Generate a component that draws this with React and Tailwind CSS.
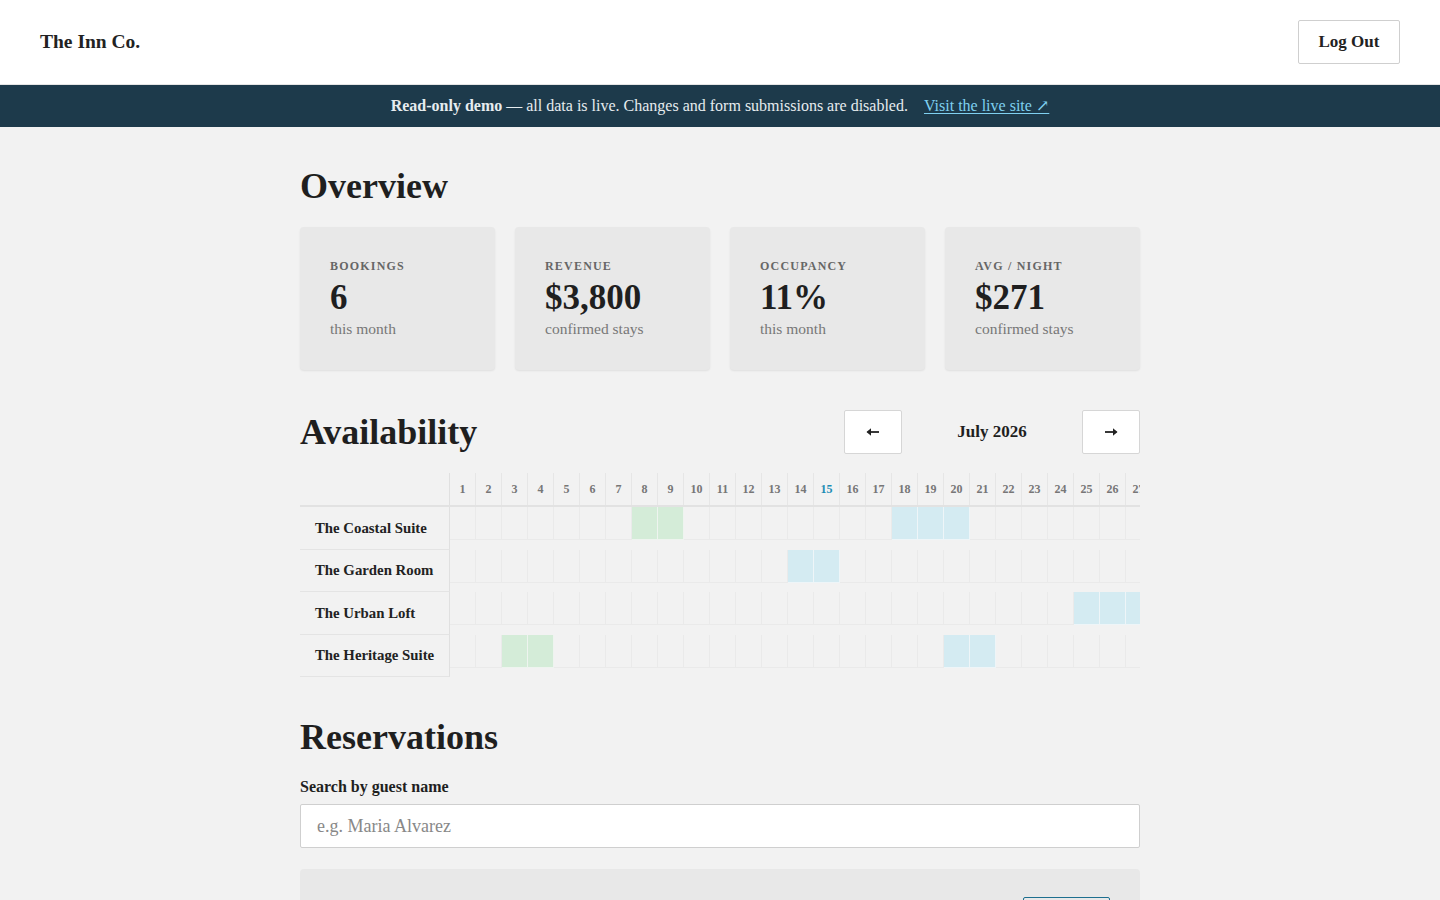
import React from 'react';

const font = { fontFamily: '"Liberation Serif", "DejaVu Serif", serif' };

const stats = [
  { label: 'Bookings', value: '6', sub: 'this month' },
  { label: 'Revenue', value: '$3,800', sub: 'confirmed stays' },
  { label: 'Occupancy', value: '11%', sub: 'this month' },
  { label: 'Avg / Night', value: '$271', sub: 'confirmed stays' },
];

// booked days per room: g = green (confirmed), b = blue (pending)
const rooms = [
  { name: 'The Coastal Suite', days: { 8: 'g', 9: 'g', 18: 'b', 19: 'b', 20: 'b' } },
  { name: 'The Garden Room', days: { 14: 'b', 15: 'b' } },
  { name: 'The Urban Loft', days: { 25: 'b', 26: 'b', 27: 'b' } },
  { name: 'The Heritage Suite', days: { 3: 'g', 4: 'g', 20: 'b', 21: 'b' } },
];

const days = Array.from({ length: 31 }, (_, i) => i + 1);
const today = 15;

function StatCard({ label, value, sub }) {
  return (
    <div className="bg-[#e8e8e8] rounded-[4px] shadow-[0_1px_2px_rgba(0,0,0,0.08)] h-[143px] px-[30px] pt-[30px]">
      <div className="text-[12px] leading-[18px] uppercase tracking-[0.1em] text-[#666] font-semibold">{label}</div>
      <div className="mt-[4px] text-[35px] leading-[38px] font-bold text-[#1f1f1f]">{value}</div>
      <div className="mt-[2px] text-[15.5px] leading-[20px] text-[#777]">{sub}</div>
    </div>
  );
}

function Arrow({ dir }) {
  return (
    <svg width="14" height="10" viewBox="0 0 14 10" className={dir === 'right' ? 'rotate-180' : ''}>
      <path d="M1.5 5H13" stroke="#222" strokeWidth="1.8" />
      <path d="M0.5 5L5 1.2V8.8Z" fill="#222" />
    </svg>
  );
}

function dayCellClass(kind) {
  if (kind === 'g') return 'bg-[#d4ecd8] border-[#eef4ef]';
  if (kind === 'b') return 'bg-[#d4ebf2] border-[#eef5f8]';
  return 'border-[#eaeaea]';
}

export default function App() {
  return (
    <div style={font} className="min-h-screen bg-[#f2f2f2] text-[#1f1f1f]">
      <header className="h-[85px] bg-white border-b border-[#e5e5e5] px-10 flex items-center justify-between">
        <div className="text-[19.5px] font-bold text-[#222]">The Inn Co.</div>
        <button className="h-[44px] w-[102px] border border-[#cfcfcf] rounded-[2px] bg-white text-[17px] font-bold text-[#222]">
          Log Out
        </button>
      </header>

      <div className="h-[42px] bg-[#1d3a4b] flex items-center justify-center text-[16px] text-[#e6ecef]">
        <span>
          <span className="font-bold">Read-only demo</span> — all data is live. Changes and form submissions are disabled.
        </span>
        <a className="ml-4 text-[#7fd0f0] underline underline-offset-2" href="#">
          Visit the live site ↗
        </a>
      </div>

      <main className="w-[840px] mx-auto pt-[40px] pb-10">
        <h2 className="text-[36px] leading-[38px] font-bold">Overview</h2>
        <div className="mt-[22px] grid grid-cols-4 gap-5">
          {stats.map((s) => (
            <StatCard key={s.label} {...s} />
          ))}
        </div>

        <div className="mt-[40px] flex items-center justify-between">
          <h2 className="text-[36px] leading-[38px] font-bold">Availability</h2>
          <div className="flex items-center">
            <button className="w-[58px] h-[44px] bg-white border border-[#d6d6d6] rounded-[2px] flex items-center justify-center">
              <Arrow dir="left" />
            </button>
            <div className="w-[180px] text-center text-[17px] font-bold">July 2026</div>
            <button className="w-[58px] h-[44px] bg-white border border-[#d6d6d6] rounded-[2px] flex items-center justify-center">
              <Arrow dir="right" />
            </button>
          </div>
        </div>

        <div className="mt-[19px] overflow-hidden">
          <div className="w-max">
            <div className="flex h-[34px] border-b-2 border-[#e2e2e2]">
              <div className="w-[150px] shrink-0 border-r border-[#e0e0e0]" />
              {days.map((d) => (
                <div
                  key={d}
                  className={`w-[26px] shrink-0 border-r border-[#e6e6e6] flex items-center justify-center text-[12px] font-bold ${
                    d === today ? 'text-[#1d8db5]' : 'text-[#777]'
                  }`}
                >
                  {d}
                </div>
              ))}
            </div>
            {rooms.map((r) => (
              <div key={r.name} className="flex h-[42.5px]">
                <div className="w-[150px] shrink-0 border-r border-b border-r-[#e0e0e0] border-b-[#e4e4e4] pl-[15px] flex items-center text-[14.8px] font-bold text-[#222]">
                  {r.name}
                </div>
                {days.map((d) => (
                  <div
                    key={d}
                    className={`w-[26px] h-[33px] shrink-0 border-r border-b ${dayCellClass(r.days[d])}`}
                  />
                ))}
              </div>
            ))}
          </div>
        </div>

        <h2 className="mt-[41px] text-[36px] leading-[38px] font-bold">Reservations</h2>
        <label className="block mt-[21px] text-[16px] leading-[20px] font-bold">Search by guest name</label>
        <input
          className="mt-[7px] w-full h-[44px] bg-white border border-[#cfcfcf] rounded-[2px] px-4 text-[18px] placeholder:text-[#888] outline-none"
          placeholder="e.g. Maria Alvarez"
          style={font}
        />

        <div className="mt-[21px] bg-[#e8e8e8] rounded-[4px] pt-[28px] pb-7 px-[30px]">
          <div className="flex items-start justify-between">
            <div>
              <div className="text-[18px] font-bold">Maria Alvarez</div>
              <div className="text-[14px] text-[#777]">The Coastal Suite · Jul 8 – Jul 10</div>
            </div>
            <button className="w-[87px] h-[36px] border border-[#1d6f8f] rounded-[2px] text-[#1d6f8f] text-[14px] font-bold">
              Details
            </button>
          </div>
        </div>
      </main>
    </div>
  );
}
